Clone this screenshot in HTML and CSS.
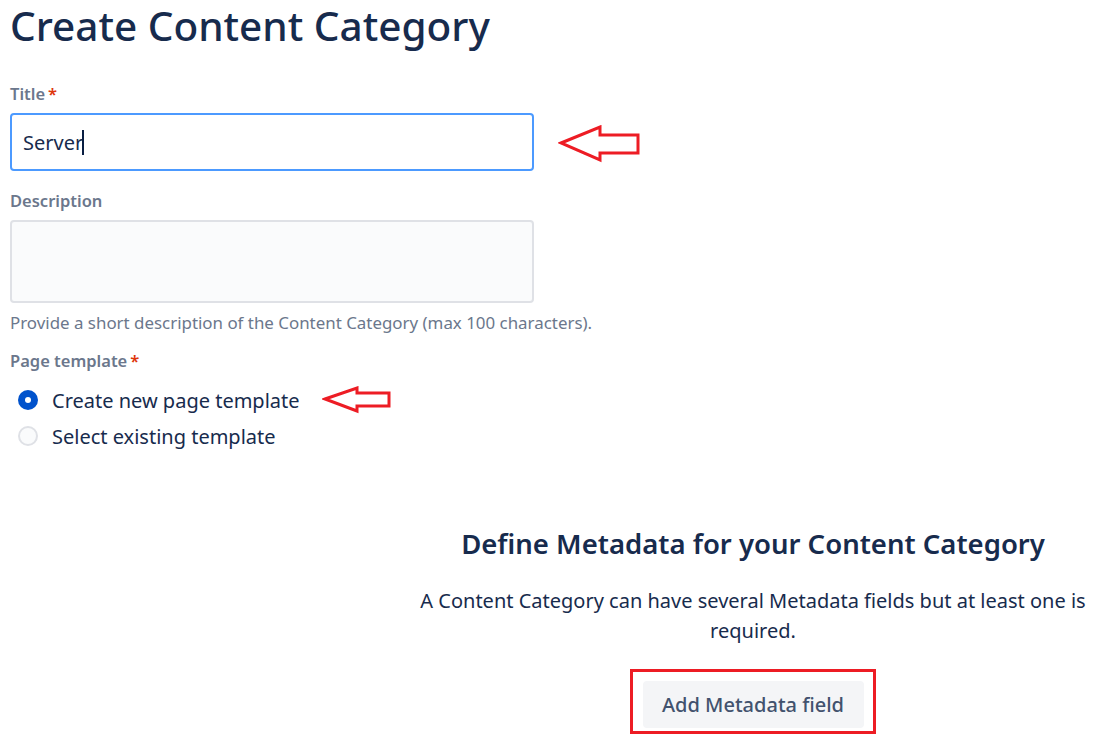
FILE: index.html
```html
<!DOCTYPE html>
<html lang="en">
<head>
<meta charset="utf-8">
<title>Create Content Category</title>
<link rel="stylesheet" href="styles.css">
</head>
<body>
<div class="page">
  <h1 class="page-title">Create Content Category</h1>

  <form class="form">
    <div class="field">
      <label class="label">Title<span class="req">*</span></label>
      <div class="annotated">
        <div class="input focused"><span class="value">Server</span><span class="caret"></span></div>
        <svg class="arrow arrow-title" width="84" height="40" viewBox="0 0 84 40">
          <path d="M3 18 L42 2 L42 10 L80 10 L80 28 L42 28 L42 35 Z" fill="none" stroke="#ed1c24" stroke-width="3" stroke-linejoin="miter"/>
        </svg>
      </div>
    </div>

    <div class="field">
      <label class="label">Description</label>
      <div class="textarea"></div>
      <p class="helper">Provide a short description of the Content Category (max 100 characters).</p>
    </div>

    <div class="field">
      <label class="label">Page template<span class="req">*</span></label>
      <div class="radios">
        <div class="radio-row annotated">
          <span class="radio checked"></span>
          <span class="radio-label">Create new page template</span>
          <svg class="arrow arrow-radio" width="70" height="28" viewBox="0 0 70 28">
            <path d="M3 13 L35 2 L35 7 L67 7 L67 20 L35 20 L35 25 Z" fill="none" stroke="#ed1c24" stroke-width="3" stroke-linejoin="miter"/>
          </svg>
        </div>
        <div class="radio-row">
          <span class="radio"></span>
          <span class="radio-label">Select existing template</span>
        </div>
      </div>
    </div>
  </form>

  <section class="metadata">
    <h2 class="meta-title">Define Metadata for your Content Category</h2>
    <p class="meta-text">A Content Category can have several Metadata fields but at least one is required.</p>
    <div class="btn-wrap">
      <button class="btn" type="button">Add Metadata field</button>
    </div>
  </section>
</div>
</body>
</html>
```

FILE: styles.css
```css
* { box-sizing: border-box; }

html, body {
  margin: 0;
  padding: 0;
  background: #ffffff;
}

body {
  font-family: "Noto Sans", "Open Sans", "Liberation Sans", sans-serif;
  color: #172b4d;
  overflow: hidden;
}

.page {
  padding: 0 0 0 10px;
  width: 1104px;
  height: 739px;
}

.page-title {
  margin: 0;
  padding-top: 2px;
  font-size: 40.5px;
  line-height: 48px;
  font-weight: 500;
  color: #172b4d;
}

.form {
  width: 524px;
  margin-top: 34px;
}

.field {
  display: flex;
  flex-direction: column;
}

.label {
  font-size: 16.5px;
  line-height: 20px;
  font-weight: 600;
  color: #6b778c;
  margin-bottom: 9px;
}

.req {
  color: #de350b;
  margin-left: 3px;
}

.annotated {
  position: relative;
}

.input {
  height: 58px;
  border: 2px solid #4c9aff;
  border-radius: 4px;
  background: #ffffff;
  display: flex;
  align-items: center;
  padding-left: 11px;
  font-size: 20px;
  color: #172b4d;
}

.caret {
  display: inline-block;
  width: 2px;
  height: 25px;
  background: #091e42;
  margin-left: -1px;
}

.arrow {
  position: absolute;
  display: block;
}

.arrow-title {
  left: 548px;
  top: 12px;
}

.arrow-radio {
  left: 312px;
  top: 4px;
}

.field + .field {
  margin-top: 20px;
}

.textarea {
  height: 83px;
  border: 2px solid #dfe1e6;
  border-radius: 4px;
  background: #fafbfc;
}

.helper {
  margin: 8px 0 0;
  font-size: 16.9px;
  line-height: 24px;
  color: #6b778c;
  white-space: nowrap;
}

.field:nth-child(3) {
  margin-top: 16px;
}

.radios {
  display: flex;
  flex-direction: column;
  margin-top: 2px;
}

.radio-row {
  display: flex;
  align-items: center;
  height: 36px;
  padding-left: 8px;
}

.radio {
  width: 20px;
  height: 20px;
  border-radius: 50%;
  border: 2px solid #dfe1e6;
  background: #fafbfc;
  margin-right: 14px;
  flex: none;
  position: relative;
}

.radio.checked {
  border: none;
  background: #0052cc;
}

.radio.checked::after {
  content: "";
  position: absolute;
  left: 7px;
  top: 7px;
  width: 6px;
  height: 6px;
  border-radius: 50%;
  background: #ffffff;
}

.radio-label {
  font-size: 20px;
  color: #172b4d;
  white-space: nowrap;
}

.metadata {
  margin-left: 393px;
  width: 700px;
  text-align: center;
  margin-top: 72px;
}

.meta-title {
  margin: 0;
  font-size: 27.5px;
  line-height: 36px;
  font-weight: 600;
  color: #172b4d;
}

.meta-text {
  margin: 24px auto 0;
  width: 680px;
  font-size: 20px;
  line-height: 30px;
  color: #172b4d;
}

.btn-wrap {
  display: inline-block;
  position: relative;
  margin-top: 35px;
}

.btn-wrap::after {
  content: "";
  position: absolute;
  left: -13px;
  right: -12px;
  top: -12px;
  bottom: -6px;
  border: 3px solid #ed1c24;
  pointer-events: none;
}

.btn {
  display: block;
  height: 47px;
  width: 221px;
  border: none;
  border-radius: 4px;
  background: #f4f5f7;
  color: #42526e;
  font-family: inherit;
  font-size: 20px;
  font-weight: 500;
  padding: 0;
}
```
